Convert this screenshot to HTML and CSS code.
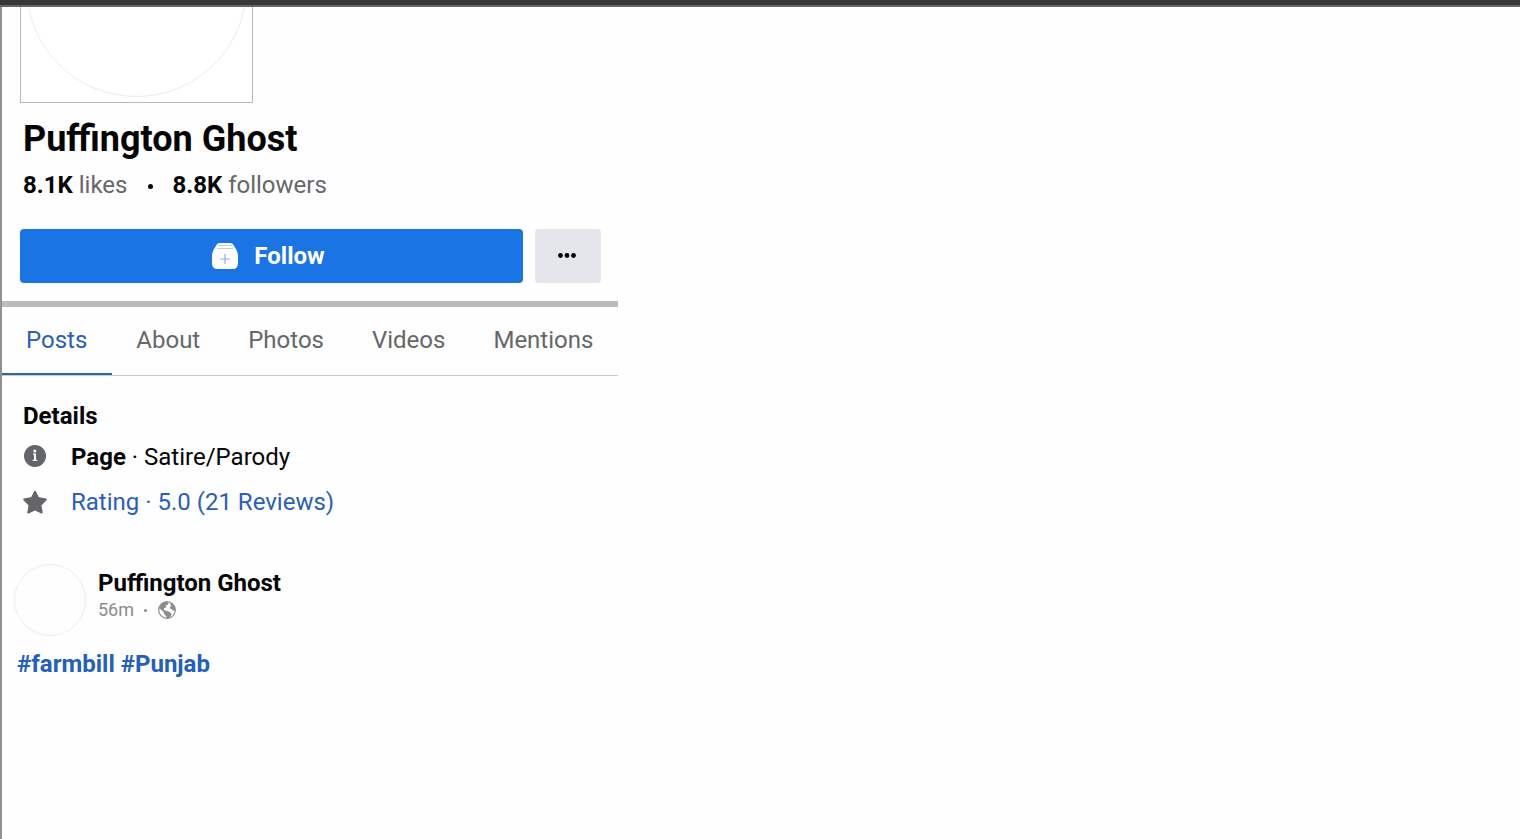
FILE: index.html
```html
<!DOCTYPE html>
<html lang="en">
<head>
<meta charset="utf-8">
<title>Puffington Ghost</title>
<link rel="stylesheet" href="styles.css">
</head>
<body>
<header class="topbar"></header>
<main class="page">
  <div class="cover"><div class="frame"><div class="portrait"></div></div></div>
  <section class="profile">
    <h1 class="name">Puffington Ghost</h1>
    <p class="stats">
      <span><b>8.1K</b> likes</span>
      <span class="dot"></span>
      <span><b>8.8K</b> followers</span>
    </p>
  </section>
  <div class="actions">
    <button class="follow" type="button">
      <svg width="26" height="26" viewBox="0 0 26 26" aria-hidden="true">
        <path d="M8 0h10q2.500 0 3.500 2l3 5q1.500 3 1.500 6v7q0 6-5.500 6h-15Q0 26 0 20v-7q0-3 1.500-6l3-5Q5.500 0 8 0z" fill="#fff"/>
        <path d="M6 2.500h14M5 5.500h16" stroke="#b5d1f5" stroke-width="1"/>
        <path d="M13 11v10M8 16h10" stroke="#8fb2e8" stroke-width="1.200"/>
      </svg>
      <span>Follow</span>
    </button>
    <button class="more" type="button" aria-label="More options">
      <svg width="18" height="6" viewBox="0 0 18 6" aria-hidden="true"><circle cx="2.500" cy="2.500" r="2.400"/><circle cx="9" cy="2.500" r="2.400"/><circle cx="15.500" cy="2.500" r="2.400"/></svg>
    </button>
  </div>
  <nav class="tabs">
    <a class="tab active" href="#posts">Posts</a>
    <a class="tab" href="#about">About</a>
    <a class="tab" href="#photos">Photos</a>
    <a class="tab" href="#videos">Videos</a>
    <a class="tab" href="#mentions">Mentions</a>
  </nav>
  <section class="details">
    <h2 class="heading">Details</h2>
    <p class="detail">
      <svg width="24" height="24" viewBox="0 0 24 24" aria-hidden="true"><circle cx="12" cy="11" r="11" fill="#636569"/><path d="M10 8.500h3v6.200h1.300V16H9.700v-1.300H11V9.800h-1z" fill="#fff"/><circle cx="11.800" cy="5.900" r="1.500" fill="#fff"/></svg>
      <span><b>Page</b> · Satire/Parody</span>
    </p>
    <p class="detail">
      <svg width="24" height="24" viewBox="0 0 24 24" aria-hidden="true"><path d="M12 1.800l3.200 6.300 7.600 1.400-5.400 5.500 1.300 7.500L12 19.300l-6.700 3.200 1.300-7.500L1.200 9.500l7.600-1.400z" fill="#636569" stroke="#636569" stroke-width="2" stroke-linejoin="round"/></svg>
      <a class="link" href="#reviews">Rating · 5.0 (21 Reviews)</a>
    </p>
  </section>
  <article class="post">
    <div class="author">
      <div class="avatar"></div>
      <div>
        <h3 class="heading">Puffington Ghost</h3>
        <p class="meta">
          <span>56m</span><span class="dot small"></span>
          <svg width="18" height="18" viewBox="0 0 18 18" aria-label="Public" role="img"><circle cx="9" cy="9" r="8.300" fill="#fff" stroke="#8b8c8f" stroke-width="1.200"/><path d="M1 7Q2.500 1.500 8 .8l2.500.7-.3 1.800-2.700 1.500 1 1.500-2 .7-1 1.500 1.300 1 2.200.5 2.500 1 2 1.700-.7 2.300-2.500 2.700-1.800-.2-.3-2.500-1.700-1.500L5.500 11 4 9.500zM12.500 1.500q3.500 1.500 4.500 5.500l-.3 3-1.700-.5-1.500-1.500-1.700-.5.2-1.800 1.500-.7-1.200-1.500z" fill="#8b8c8f"/></svg>
        </p>
      </div>
    </div>
    <p class="tags"><a href="#farmbill">#farmbill</a> <a href="#punjab">#Punjab</a></p>
  </article>
</main>
</body>
</html>
```
FILE: styles.css
```css
* { box-sizing: border-box; }
body {
  margin: 0;
  min-height: 100vh;
  background: #fefefe;
  color: #050505;
  font: 24px/28px Roboto, sans-serif;
  display: flex;
  flex-direction: column;
}
h1, h2, h3, p { margin: 0; }
b, .name, .heading { font-weight: 700; }
a { color: inherit; text-decoration: none; }
svg { display: block; flex: none; }
.topbar { height: 7px; background: #383838; border-bottom: 2px solid #666; }
.page { flex: 1; border-left: 2px solid #929292; }
.page > * { max-width: 616px; }
.cover {
  height: 96px;
  padding-left: 18px;
  display: flex;
  align-items: flex-end;
  overflow: hidden;
}
.frame { padding: 5px; border: 1px solid #b8b8b8; background: #fff; }
.portrait { width: 221px; height: 221px; border: 1px solid #ececec; border-radius: 50%; }
.profile { padding: 14px 21px 0; }
.name { font-size: 36px; line-height: 44px; }
.stats { display: flex; align-items: center; margin-top: 10px; color: #65676b; }
.stats b { color: #050505; }
.dot { width: 5px; height: 5px; margin: 3px 19px 0 21px; border-radius: 50%; background: #050505; }
.actions { display: flex; gap: 12px; padding: 30px 17px 18px 18px; }
.actions button {
  height: 54px;
  padding: 0;
  border: 0;
  border-radius: 4px;
  display: flex;
  align-items: center;
  justify-content: center;
  font: 700 24px/28px Roboto, sans-serif;
}
.actions .follow { flex: 1; gap: 16px; padding-right: 6px; background: #1b74e4; color: #fff; }
.actions .more { width: 66px; padding-right: 2px; background: #e4e6eb; color: #050505; }
.tabs {
  display: flex;
  border-top: 6px solid #bcbcbc;
  border-bottom: 1px solid #ccc;
  color: #65676b;
}
.tab { padding: 19px 24px; border-bottom: 2px solid transparent; }
.tab.active { padding-right: 25px; color: #2b5fb8; border-color: #2c62ae; }
.details { padding: 26px 21px 0; }
.heading { font-size: 24px; line-height: 28px; }
.detail { display: flex; align-items: center; gap: 24px; margin-top: 13px; }
.detail + .detail { margin-top: 17px; }
.link { color: #2b5fb8; }
.post { padding: 48px 12px 0; }
.author { display: flex; gap: 12px; }
.avatar { width: 72px; height: 72px; border: 1px solid #f1ebf2; border-radius: 50%; }
.author .heading { margin-top: 5px; }
.meta { display: flex; align-items: center; color: #8b8c8f; font-size: 18px; line-height: 26px; }
.small { width: 3px; height: 3px; margin: 0 11px 0 10px; background: #8b8c8f; }
.tags { margin-top: 14px; padding-left: 3px; color: #2460b9; font-weight: 700; }
```
